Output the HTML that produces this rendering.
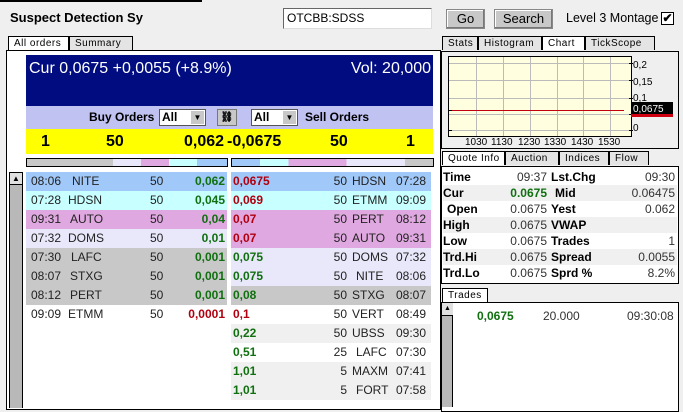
<!DOCTYPE html>
<html><head><meta charset="utf-8">
<style>
*{box-sizing:border-box;margin:0;padding:0}
body{width:683px;height:407px;overflow:hidden;background:#efefef;font-family:"Liberation Sans",Arial,sans-serif;font-size:12px;position:relative;color:#000}
.a{position:absolute}
.tab{position:absolute;height:14px;border:1px solid #000;border-bottom:none;background:#e4e4e4;font-size:10px;line-height:13px;padding-left:5px;letter-spacing:.5px}
.tab.on{background:#fff}
.btn{position:absolute;background:#c8c8c8;border:1px solid #888;box-shadow:inset -1px -1px #777,inset 1px 1px #fff;text-align:center;font-size:13px;line-height:18px}
.row{position:absolute;height:19px;line-height:19px;font-size:12px;color:#222}
.row span{position:absolute;top:0}
.g{color:#107010;font-weight:bold}
.r{color:#b00010;font-weight:bold}
.q{position:absolute;left:443px;width:234px;height:16px;line-height:16px;font-size:12px}
.q span{position:absolute;top:0}
.q .l{font-weight:bold;left:0}
.q .v1{right:130px;color:#333}
.q .l2{font-weight:bold;left:108px}
.q .v2{right:2px;color:#333}
.rr .n{left:121px}.rr .t{right:5px}.rr .c{right:84px}
</style></head><body>
<div class="a" style="left:0;top:0;width:202px;height:2px;background:#000"></div>
<div class="a" style="left:10px;top:10px;font-weight:bold;font-size:13px">Suspect Detection Sy</div>
<div class="a" style="left:283px;top:8px;width:149px;height:21px;background:#fff;border:1px solid #666;border-right-color:#ddd;border-bottom-color:#ddd;font-size:12px;line-height:19px;padding-left:3px">OTCBB:SDSS</div>
<div class="btn" style="left:446px;top:9px;width:39px;height:20px">Go</div>
<div class="btn" style="left:494px;top:9px;width:59px;height:20px">Search</div>
<div class="a" style="left:566px;top:11px;font-size:12.5px">Level 3 Montage</div>
<div class="a" style="left:661px;top:12px;width:13px;height:13px;background:#fff;border:1px solid #000;font-size:12px;line-height:11px;text-align:center;font-weight:bold">✔</div>

<div class="tab on" style="left:8px;top:36px;width:61px">All orders</div>
<div class="tab" style="left:69px;top:36px;width:64px">Summary</div>
<div class="a" style="left:6px;top:50px;width:435px;height:360px;border:1px solid #000;background:#fff"></div>
<div class="a" style="left:26px;top:55px;width:407px;height:51px;background:#000c80;color:#fff;font-size:16px">
<span class="a" style="left:3px;top:5px">Cur 0,0675 +0,0055 (+8.9%)</span>
<span class="a" style="right:2px;top:5px">Vol: 20,000</span></div>
<div class="a" style="left:26px;top:106px;width:407px;height:23px;background:#c0c2f2;font-weight:bold;font-size:12px">
<span class="a" style="left:63px;top:4px">Buy Orders</span>
<span class="a" style="left:133px;top:3px;width:47px;height:17px;background:#fff;border:1px solid #555;padding-left:2px;line-height:15px">All<span class="a" style="right:1px;top:1px;width:13px;height:13px;background:#c8c8c8;font-size:8px;text-align:center;line-height:13px">▼</span></span>
<span class="a" style="left:191px;top:3px;width:20px;height:17px;background:#c8c8c8;border:1px solid #777;font-size:10px;text-align:center;line-height:15px">⛓</span>
<span class="a" style="left:225px;top:3px;width:47px;height:17px;background:#fff;border:1px solid #555;padding-left:2px;line-height:15px">All<span class="a" style="right:1px;top:1px;width:13px;height:13px;background:#c8c8c8;font-size:8px;text-align:center;line-height:13px">▼</span></span>
<span class="a" style="left:279px;top:4px">Sell Orders</span></div>
<div class="a" style="left:26px;top:129px;width:407px;height:25px;background:#ffff00;font-weight:bold;font-size:16px;line-height:25px">
<span class="a" style="left:15px">1</span><span class="a" style="left:80px">50</span><span class="a" style="left:158px">0,062</span><span class="a" style="left:201px">-0,0675</span><span class="a" style="left:304px">50</span><span class="a" style="left:380px">1</span></div>
<div class="a" style="left:26px;top:158px;width:202px;height:9px;border:1px solid #000;background:linear-gradient(90deg,#c8c8c8 0 43%,#e8e8fa 43% 57%,#e0a8e0 57% 71%,#c8ffff 71% 85%,#a0c8f8 85%)"></div>
<div class="a" style="left:231px;top:158px;width:203px;height:9px;border:1px solid #000;background:linear-gradient(90deg,#a0c8f8 0 14%,#c8ffff 14% 28%,#e0a8e0 28% 57%,#e8e8fa 57% 86%,#c8c8c8 86%)"></div>
<div class="a" style="left:9px;top:172px;width:14px;height:236px;background:#b8b8b8;border-left:1px solid #000;border-right:1px solid #000"></div>
<div class="a" style="left:9px;top:172px;width:14px;height:13px;background:#e0e0e0;border:1px solid #000;font-size:8px;text-align:center;line-height:11px">▲</div>

<div class="row" style="left:26px;top:172px;width:201px;background:#a0c8f8"><span style="left:5px">08:06</span><span style="left:46px">NITE</span><span style="left:124px">50</span><span class="g" style="right:2px">0,062</span></div>
<div class="row" style="left:26px;top:191px;width:201px;background:#c8ffff"><span style="left:5px">07:28</span><span style="left:42px">HDSN</span><span style="left:124px">50</span><span class="g" style="right:2px">0,045</span></div>
<div class="row" style="left:26px;top:210px;width:201px;background:#e0a8e0"><span style="left:5px">09:31</span><span style="left:44px">AUTO</span><span style="left:124px">50</span><span class="g" style="right:2px">0,04</span></div>
<div class="row" style="left:26px;top:229px;width:201px;background:#e8e8fa"><span style="left:5px">07:32</span><span style="left:42px">DOMS</span><span style="left:124px">50</span><span class="g" style="right:2px">0,01</span></div>
<div class="row" style="left:26px;top:248px;width:201px;background:#c8c8c8"><span style="left:5px">07:30</span><span style="left:45px">LAFC</span><span style="left:124px">50</span><span class="g" style="right:2px">0,001</span></div>
<div class="row" style="left:26px;top:267px;width:201px;background:#c8c8c8"><span style="left:5px">08:07</span><span style="left:44px">STXG</span><span style="left:124px">50</span><span class="g" style="right:2px">0,001</span></div>
<div class="row" style="left:26px;top:286px;width:201px;background:#c8c8c8"><span style="left:5px">08:12</span><span style="left:44px">PERT</span><span style="left:124px">50</span><span class="g" style="right:2px">0,001</span></div>
<div class="row" style="left:26px;top:305px;width:201px"><span style="left:5px">09:09</span><span style="left:42px">ETMM</span><span style="left:124px">50</span><span class="r" style="right:2px">0,0001</span></div>

<div class="row rr" style="left:231px;top:172px;width:200px;background:#a0c8f8"><span class="r" style="left:2px">0,0675</span><span class="c">50</span><span class="n">HDSN</span><span class="t">07:28</span></div>
<div class="row rr" style="left:231px;top:191px;width:200px;background:#c8ffff"><span class="r" style="left:2px">0,069</span><span class="c">50</span><span class="n">ETMM</span><span class="t">09:09</span></div>
<div class="row rr" style="left:231px;top:210px;width:200px;background:#e0a8e0"><span class="r" style="left:2px">0,07</span><span class="c">50</span><span class="n">PERT</span><span class="t">08:12</span></div>
<div class="row rr" style="left:231px;top:229px;width:200px;background:#e0a8e0"><span class="r" style="left:2px">0,07</span><span class="c">50</span><span class="n">AUTO</span><span class="t">09:31</span></div>
<div class="row rr" style="left:231px;top:248px;width:200px;background:#e8e8fa"><span class="g" style="left:2px">0,075</span><span class="c">50</span><span class="n">DOMS</span><span class="t">07:32</span></div>
<div class="row rr" style="left:231px;top:267px;width:200px;background:#e8e8fa"><span class="g" style="left:2px">0,075</span><span class="c">50</span><span class="n" style="left:125px">NITE</span><span class="t">08:06</span></div>
<div class="row rr" style="left:231px;top:286px;width:200px;background:#c8c8c8"><span class="g" style="left:2px">0,08</span><span class="c">50</span><span class="n">STXG</span><span class="t">08:07</span></div>
<div class="row rr" style="left:231px;top:305px;width:200px"><span class="r" style="left:2px">0,1</span><span class="c">50</span><span class="n">VERT</span><span class="t">08:49</span></div>
<div class="row rr" style="left:231px;top:324px;width:200px;background:#f0f0f0"><span class="g" style="left:2px">0,22</span><span class="c">50</span><span class="n">UBSS</span><span class="t">09:30</span></div>
<div class="row rr" style="left:231px;top:343px;width:200px"><span class="g" style="left:2px">0,51</span><span class="c">25</span><span class="n" style="left:125px">LAFC</span><span class="t">07:30</span></div>
<div class="row rr" style="left:231px;top:362px;width:200px;background:#f0f0f0"><span class="g" style="left:2px">1,01</span><span class="c">5</span><span class="n">MAXM</span><span class="t">07:41</span></div>
<div class="row rr" style="left:231px;top:381px;width:200px;background:#f0f0f0"><span class="g" style="left:2px">1,01</span><span class="c">5</span><span class="n" style="left:125px">FORT</span><span class="t">07:58</span></div>

<div class="tab" style="left:442px;top:36px;width:36px">Stats</div>
<div class="tab" style="left:478px;top:36px;width:64px">Histogram</div>
<div class="tab on" style="left:542px;top:36px;width:43px">Chart</div>
<div class="tab" style="left:585px;top:36px;width:70px">TickScope</div>
<div class="a" style="left:441px;top:51px;width:238px;height:98px;border:1px solid #000;background:#efefef"></div>
<svg class="a" style="left:441px;top:51px" width="238" height="98">
<rect x="7.5" y="5.5" width="183" height="80" fill="#ffffe0" stroke="#000"/>
<g stroke="#bbb" stroke-width="1">
<path d="M35.5 6v79M62.5 6v79M89.5 6v79M116.5 6v79M142.5 6v79M169.5 6v79M8 12.5h182M8 29.5h182M8 47.5h182M8 63.5h182M8 79.5h182"/></g>
<path d="M8 59.5h175" stroke="#c00010" stroke-width="1"/>
<path d="M188 12.5h4M188 29.5h4M188 47.5h4M188 63.5h4M188 79.5h4M8 59.5h3M8 79.5h3" stroke="#000"/>
<g font-size="10" font-family="Liberation Sans" fill="#000">
<text x="192" y="17">0,2</text><text x="192" y="34">0,15</text><text x="192" y="50">0,1</text><text x="192" y="80">0</text>
<text x="24" y="94">1030</text><text x="50" y="94">1130</text><text x="77" y="94">1230</text><text x="103" y="94">1330</text><text x="130" y="94">1430</text><text x="157" y="94">1530</text></g>
<rect x="190" y="51" width="42" height="12" fill="#000"/>
<rect x="190" y="63" width="42" height="3" fill="#d00010"/>
<text x="192" y="61" font-size="10" font-family="Liberation Sans" fill="#fff">0,0675</text>
</svg>

<div class="tab on" style="left:442px;top:151px;width:63px">Quote Info</div>
<div class="tab" style="left:505px;top:151px;width:54px">Auction</div>
<div class="tab" style="left:559px;top:151px;width:50px">Indices</div>
<div class="tab" style="left:609px;top:151px;width:40px">Flow</div>
<div class="a" style="left:441px;top:166px;width:238px;height:118px;border:1px solid #000;background:#fff"></div>
<div class="q" style="top:169px"><span class="l">Time</span><span class="v1">09:37</span><span class="l2">Lst.Chg</span><span class="v2">09:30</span></div>
<div class="q" style="top:185px;background:#f0f0f0"><span class="l">Cur</span><span class="v1 g" style="color:#107010">0.0675</span><span class="l2" style="left:112px">Mid</span><span class="v2">0.06475</span></div>
<div class="q" style="top:201px"><span class="l" style="left:4px">Open</span><span class="v1">0.0675</span><span class="l2">Yest</span><span class="v2">0.062</span></div>
<div class="q" style="top:217px;background:#f0f0f0"><span class="l">High</span><span class="v1">0.0675</span><span class="l2">VWAP</span></div>
<div class="q" style="top:233px"><span class="l">Low</span><span class="v1">0.0675</span><span class="l2">Trades</span><span class="v2">1</span></div>
<div class="q" style="top:249px;background:#f0f0f0"><span class="l">Trd.Hi</span><span class="v1">0.0675</span><span class="l2">Spread</span><span class="v2">0.0055</span></div>
<div class="q" style="top:265px"><span class="l">Trd.Lo</span><span class="v1">0.0675</span><span class="l2">Sprd %</span><span class="v2">8.2%</span></div>

<div class="tab on" style="left:442px;top:288px;width:46px">Trades</div>
<div class="a" style="left:441px;top:302px;width:238px;height:110px;border:1px solid #000;background:#fff"></div>
<div class="a" style="left:442px;top:303px;width:11px;height:104px;background:#b8b8b8;border-right:1px solid #000"></div>
<div class="a" style="left:442px;top:303px;width:11px;height:13px;background:#e0e0e0;border-bottom:1px solid #000;font-size:7px;text-align:center;line-height:12px">▲</div>
<div class="a g" style="left:477px;top:309px;font-size:12px">0,0675</div>
<div class="a" style="left:543px;top:309px;font-size:12px;color:#333">20.000</div>
<div class="a" style="left:627px;top:309px;font-size:12px;color:#333">09:30:08</div>
</body></html>
